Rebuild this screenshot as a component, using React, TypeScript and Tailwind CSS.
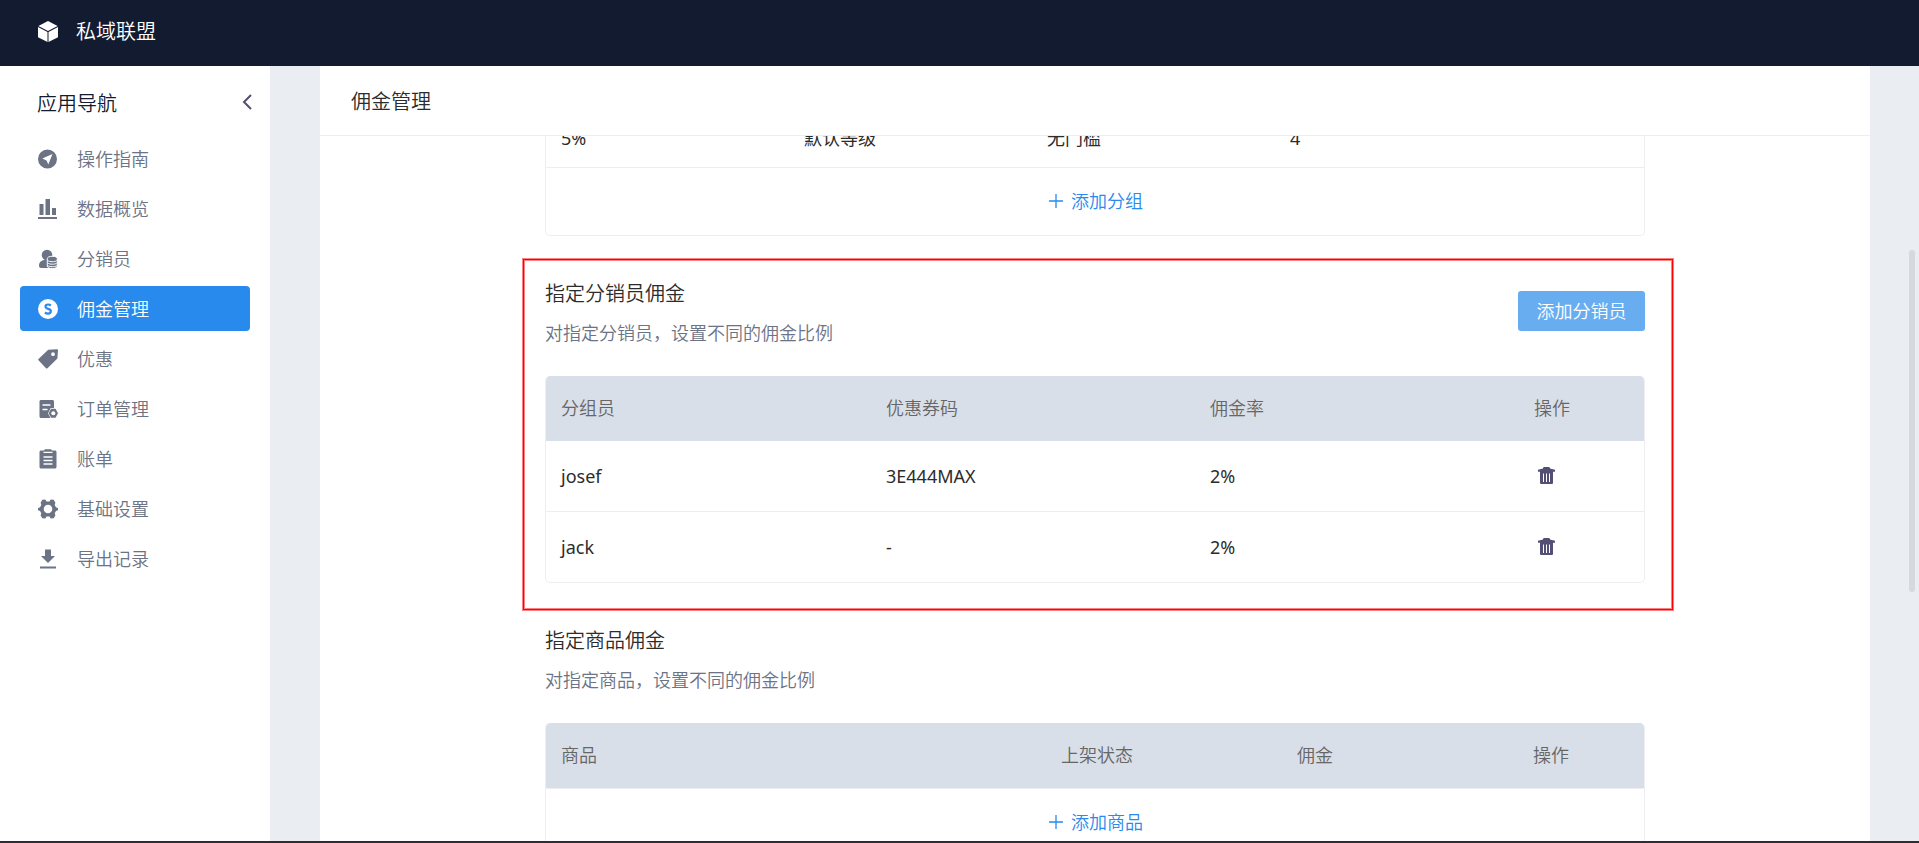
import type { ReactNode } from "react";

type IconProps = { className?: string };

const CubeIcon = () => (
    <svg viewBox="0 0 20 22" className="h-[22px] w-5" fill="currentColor">
        <path d="M10 0 19.6 5 10 9.900.4 5z" />
        <path d="M0 6.100 9.500 11v10L0 16.200zM20 6.100 10.500 11v10L20 16.200z" />
    </svg>
);

const GuideIcon = ({ className }: IconProps) => (
    <svg viewBox="0 0 20 20" className={className} fill="currentColor">
        <path
            fillRule="evenodd"
            d="M9.5.5a9.5 9.5 0 1 0 0 19 9.500 9.500 0 0 0 0-19zM14.500 5l-4.200 10.400-1.800-4-4.200-1.900z"
        />
    </svg>
);

const ChartIcon = ({ className }: IconProps) => (
    <svg viewBox="0 0 20 20" className={className} fill="currentColor">
        <path d="M1.500 5h4v11h-4zM7.500 0H12v16H7.500zM14 9h4v7h-4zM0 18h19v2H0z" />
    </svg>
);

const SellerIcon = ({ className }: IconProps) => (
    <svg viewBox="0 0 20 20" className={className} fill="currentColor">
        <circle cx="9" cy="6" r="5.300" />
        <path d="M1 16.500c0-3.200 2.400-5.500 6-5.500h3v8H3c-1.500 0-2-1-2-2.500z" />
        <path
            d="M9.300 9.700c0-1.500 2-2.400 5-2.400s5 .9 5 2.400v7.300c0 1.500-2 2.600-5 2.600s-5-1.100-5-2.600z"
            stroke="white"
            strokeWidth="1"
        />
        <path
            d="M9.800 11.500c1.200 1 2.600 1.200 4.500 1.200s3.300-.2 4.500-1.200M9.800 14c1.200 1 2.600 1.200 4.500 1.200s3.300-.2 4.500-1.200M9.800 16.500c1.200 1 2.600 1.200 4.500 1.200s3.300-.2 4.500-1.200"
            fill="none"
            stroke="white"
            strokeWidth="1"
        />
    </svg>
);

const CommissionIcon = ({ className }: IconProps) => (
    <svg viewBox="0 0 20 20" className={className}>
        <circle cx="10" cy="10" r="10" fill="currentColor" />
        <path
            d="M12.800 6.600C12 5.800 11.200 5.500 10.100 5.500 8.600 5.500 7.500 6.300 7.500 7.600c0 1.400 1.200 1.900 2.600 2.300 1.500.4 2.700 1 2.700 2.400 0 1.400-1.200 2.300-2.800 2.300-1.200 0-2.200-.4-3-1.200"
            fill="none"
            stroke="#288aed"
            strokeWidth="2.200"
        />
    </svg>
);

const TagIcon = ({ className }: IconProps) => (
    <svg viewBox="0 0 20 20" className={className} fill="currentColor">
        <path
            fillRule="evenodd"
            d="M10.200.8 19 .3c.6 0 1 .4 1 1l-.6 8.200-9.900 9.700c-.5.5-1 .5-1.500 0L.5 11.300c-.5-.5-.5-1 0-1.400zM15 3.300a1.900 1.900 0 1 0 0 3.800 1.900 1.900 0 0 0 0-3.800z"
        />
    </svg>
);

const OrderIcon = ({ className }: IconProps) => (
    <svg viewBox="0 0 20 20" className={className}>
        <path
            d="M3 1h11.500c.8 0 1.500.7 1.500 1.500V18c0 .600-.4 1-1 1H3c-.8 0-1.500-.7-1.500-1.500v-15C1.500 1.700 2.200 1 3 1z"
            fill="currentColor"
        />
        <path
            d="M4.500 6h8M4.500 10.500h5"
            stroke="white"
            strokeWidth="1.600"
            fill="none"
        />
        <path
            d="M12.700 9h5l2.600 5.200-2.600 5.300h-5l-2.600-5.300z"
            fill="white"
        />
        <path
            d="M13.100 9.800h4.400l2.500 4.400-2.500 4.500h-4.400l-2.500-4.500z"
            fill="currentColor"
        />
        <circle cx="15.300" cy="14.300" r="2" fill="white" />
    </svg>
);

const BillIcon = ({ className }: IconProps) => (
    <svg viewBox="0 0 20 20" className={className}>
        <path
            d="M3 1.500h3C6.300.6 7 .3 8 .3h4c1 0 1.700.3 2 1.200h3c.8 0 1.500.7 1.500 1.500v15c0 .8-.7 1.500-1.500 1.500H3c-.8 0-1.500-.7-1.500-1.500V3c0-.8.700-1.500 1.500-1.500z"
            fill="currentColor"
        />
        <path
            d="M5.500 3.300h9M5.500 8h9M5.500 11.500h9M5.500 15h9"
            stroke="white"
            strokeWidth="1.300"
        />
    </svg>
);

const SettingIcon = ({ className }: IconProps) => (
    <svg viewBox="0 0 20 20" className={className} fill="currentColor">
        <path
            fillRule="evenodd"
            d="M4.300.8 7.300.6 8.500 2.500h3L12.700.6l3 .2 1.700 3L16.700 6l1.300 2.200 2 1v2l-2 .8-1.300 2.200.7 2.200-1.700 2.900-3 .2-1.200-2h-3l-1.200 2-3-.2-1.700-2.900.7-2.200L2 12l-2-.8v-2l2-1L3.300 6l-.7-2.200zM10 5.700a4.300 4.300 0 1 0 0 8.600 4.300 4.300 0 0 0 0-8.600z"
        />
    </svg>
);

const ExportIcon = ({ className }: IconProps) => (
    <svg viewBox="0 0 20 20" className={className} fill="currentColor">
        <path d="M7 .5h6v6.500h4L10 14 3 7h4zM2 17.500h16v2H2z" />
    </svg>
);

const TrashIcon = () => (
    <svg viewBox="0 0 17 17" className="size-[17px]">
        <path
            d="M5 1.500C5 .5 5.500 0 6.500 0h4c1 0 1.500.5 1.500 1.500l5 1.300v2h-2V15.500c0 1-.5 1.500-1.500 1.500h-10C2.500 17 2 16.500 2 15.500V4.800H0v-2z"
            fill="#534e73"
        />
        <path
            d="M5.500 6.500V15M8.500 6.500V15M11.500 6.500V15"
            stroke="white"
            strokeWidth="1"
        />
    </svg>
);

const PlusIcon = () => (
    <svg viewBox="0 0 14 14" className="size-3.5" stroke="currentColor">
        <path d="M7 0v14M0 7h14" strokeWidth="1.300" />
    </svg>
);

const navItems = [
    { label: "操作指南", Icon: GuideIcon },
    { label: "数据概览", Icon: ChartIcon },
    { label: "分销员", Icon: SellerIcon },
    { label: "佣金管理", Icon: CommissionIcon, active: true },
    { label: "优惠", Icon: TagIcon },
    { label: "订单管理", Icon: OrderIcon },
    { label: "账单", Icon: BillIcon },
    { label: "基础设置", Icon: SettingIcon },
    { label: "导出记录", Icon: ExportIcon },
];

const sellers = [
    { name: "josef", coupon: "3E444MAX", rate: "2%" },
    { name: "jack", coupon: "-", rate: "2%" },
];

function Sidebar() {
    return (
        <aside className="w-[270px] shrink-0 bg-white px-[18px]">
            <div className="flex h-[70px] items-center justify-between pt-1.5 pl-[19px]">
                <h2 className="text-xl text-[#131b30]">应用导航</h2>
                <button aria-label="收起" className="-mt-1 text-[#534e73]">
                    <svg
                        viewBox="0 0 10 16"
                        className="h-4 w-2.5"
                        fill="none"
                        stroke="currentColor"
                        strokeWidth="2"
                    >
                        <path d="M9 1 2 8l7 7" />
                    </svg>
                </button>
            </div>
            <nav className="mx-0.5 flex flex-col gap-[5px]">
                {navItems.map(({ label, Icon, active }) => (
                    <a
                        key={label}
                        href="#"
                        className={
                            active
                                ? "flex h-[45px] items-center gap-[19px] rounded bg-[#288aed] pl-[18px] text-lg text-white"
                                : "flex h-[45px] items-center gap-[19px] rounded pl-[18px] text-lg text-[#6b7385]"
                        }
                    >
                        <Icon className="size-5" />
                        {label}
                    </a>
                ))}
            </nav>
        </aside>
    );
}

function SectionTitle({ title, desc }: { title: string; desc: string }) {
    return (
        <div>
            <h2 className="text-xl leading-10 text-[#2c2c2c]">{title}</h2>
            <p className="text-lg leading-[38px] text-[#6b7385]">{desc}</p>
        </div>
    );
}

function TableCard({ children }: { children: ReactNode }) {
    return (
        <div className="overflow-hidden rounded-[5px] border border-t-0 border-[#eeeef2]">
            {children}
        </div>
    );
}

function HeadCell({ children }: { children: ReactNode }) {
    return <th className="pb-0.5 pl-[15px] font-[350]">{children}</th>;
}

function AddRow({ label }: { label: string }) {
    return (
        <div className="flex h-[68px] items-center justify-center border-t border-[#eeeef2] pb-0.5 pl-0.5">
            <button className="flex items-center gap-2 text-lg text-[#288aed]">
                <PlusIcon />
                {label}
            </button>
        </div>
    );
}

export default function App() {
    return (
        <div className="flex h-screen flex-col overflow-hidden border-b-2 border-[#2d2d33] bg-[#eaedf2] font-['Noto_Sans','Noto_Sans_CJK_SC',sans-serif] font-[350]">
            <header className="flex h-[66px] shrink-0 items-center gap-[18px] bg-[#131b30] pb-0.5 pl-[38px] text-white">
                <CubeIcon />
                <h1 className="text-xl">私域联盟</h1>
            </header>
            <div className="relative flex min-h-0 flex-1">
                <Sidebar />
                <main className="mr-[49px] ml-[50px] flex flex-1 flex-col overflow-hidden bg-white">
                    <div className="flex h-[70px] shrink-0 items-center border-b border-[#eeeef2] pt-0.5 pl-[31px]">
                        <h2 className="text-xl text-[#2c2c2c]">佣金管理</h2>
                    </div>
                    <div className="min-h-0 flex-1 overflow-hidden">
                        <div className="mx-auto -mt-7 w-full max-w-[1100px]">
                            <TableCard>
                                <table className="w-full table-fixed text-left text-lg font-normal text-[#2c2c2c]">
                                    <tbody>
                                        <tr className="h-[59px]">
                                            <td className="w-[243px] pl-[15px]">
                                                5%
                                            </td>
                                            <td className="w-[243px] pl-[15px]">
                                                默认等级
                                            </td>
                                            <td className="w-[243px] pl-[15px]">
                                                无门槛
                                            </td>
                                            <td className="pl-[15px]">4</td>
                                        </tr>
                                    </tbody>
                                </table>
                                <AddRow label="添加分组" />
                            </TableCard>

                            <section className="-mr-7 -ml-[22px] mt-[23px] border border-[#ff0000] pt-3.5 pr-[27px] pb-[26px] pl-[21px] shadow-[0_0_0_1px_#ff8080,inset_0_0_0_1px_#ff8080]">
                                <div className="flex items-center justify-between">
                                    <SectionTitle
                                        title="指定分销员佣金"
                                        desc="对指定分销员，设置不同的佣金比例"
                                    />
                                    <button className="mb-1 h-10 w-[127px] rounded-[3px] bg-[#69adf1] text-lg text-white">
                                        添加分销员
                                    </button>
                                </div>
                                <div className="mt-6">
                                    <TableCard>
                                        <table className="w-full table-fixed text-left text-lg font-normal text-[#2c2c2c]">
                                            <colgroup>
                                                <col className="w-[325px]" />
                                                <col className="w-[324px]" />
                                                <col className="w-[324px]" />
                                                <col />
                                            </colgroup>
                                            <thead className="bg-[#d9dfe8] text-[#666]">
                                                <tr className="h-[65px]">
                                                    <HeadCell>分组员</HeadCell>
                                                    <HeadCell>优惠券码</HeadCell>
                                                    <HeadCell>佣金率</HeadCell>
                                                    <HeadCell>操作</HeadCell>
                                                </tr>
                                            </thead>
                                            <tbody className="divide-y divide-[#eeeef2]">
                                                {sellers.map((s) => (
                                                    <tr
                                                        key={s.name}
                                                        className="h-[71px] first:h-[70px]"
                                                    >
                                                        <td className="pl-[15px]">
                                                            {s.name}
                                                        </td>
                                                        <td className="pl-[15px]">
                                                            {s.coupon}
                                                        </td>
                                                        <td className="pl-[15px]">
                                                            {s.rate}
                                                        </td>
                                                        <td className="pl-[19px]">
                                                            <button
                                                                aria-label="删除"
                                                                className="block"
                                                            >
                                                                <TrashIcon />
                                                            </button>
                                                        </td>
                                                    </tr>
                                                ))}
                                            </tbody>
                                        </table>
                                    </TableCard>
                                </div>
                            </section>

                            <section className="pt-[11px]">
                                <SectionTitle
                                    title="指定商品佣金"
                                    desc="对指定商品，设置不同的佣金比例"
                                />
                                <div className="mt-6">
                                    <TableCard>
                                        <table className="w-full table-fixed text-left text-lg text-[#2c2c2c]">
                                            <colgroup>
                                                <col className="w-[500px]" />
                                                <col className="w-[236px]" />
                                                <col className="w-[236px]" />
                                                <col />
                                            </colgroup>
                                            <thead className="bg-[#d9dfe8] text-[#666]">
                                                <tr className="h-[65px]">
                                                    <HeadCell>商品</HeadCell>
                                                    <HeadCell>上架状态</HeadCell>
                                                    <HeadCell>佣金</HeadCell>
                                                    <HeadCell>操作</HeadCell>
                                                </tr>
                                            </thead>
                                        </table>
                                        <AddRow label="添加商品" />
                                    </TableCard>
                                </div>
                            </section>
                        </div>
                    </div>
                </main>
                <div className="absolute top-[184px] right-1 h-[342px] w-1.5 rounded-full bg-[#d6d9dd]" />
            </div>
        </div>
    );
}
